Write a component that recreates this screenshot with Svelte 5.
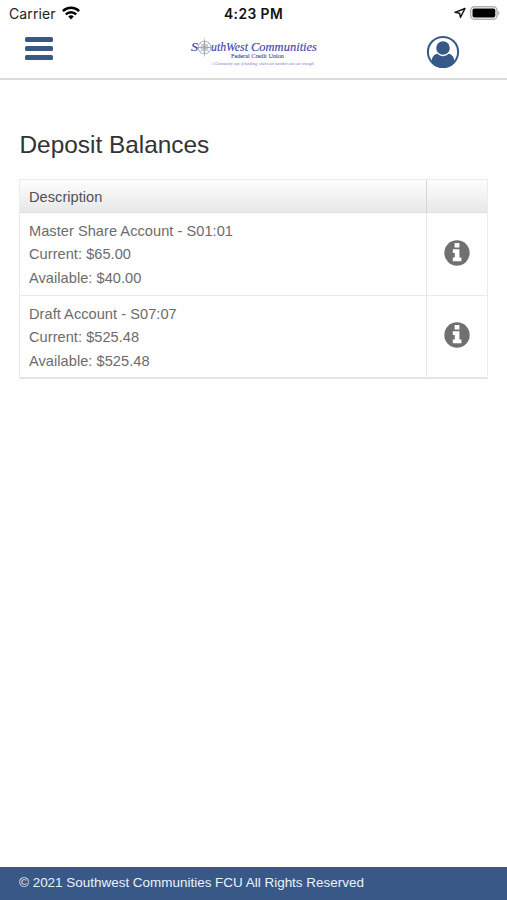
<script lang="ts">
  type Account = { name: string; current: string; available: string };

  const accounts: Account[] = [
    { name: 'Master Share Account - S01:01', current: '$65.00', available: '$40.00' },
    { name: 'Draft Account - S07:07', current: '$525.48', available: '$525.48' },
  ];
</script>

<div class="screen">
  <div class="status">
    <div class="carrier">
      <span>Carrier</span>
      <svg width="18" height="14" viewBox="0 0 18 14" fill="none" stroke="#000" stroke-width="2.5">
        <path d="M0.9 5.2C5.3 0.7 12.7 0.7 17.1 5.2" />
        <path d="M3.8 8.3C6.8 5.4 11.2 5.4 14.2 8.3" />
        <path d="M6.2 10.4C7.8 8.8 10.2 8.8 11.8 10.4L9 13.4Z" fill="#000" stroke="none" />
      </svg>
    </div>
    <span class="time">4:23 PM</span>
    <div class="power">
      <svg width="12" height="12" viewBox="0 0 12 12" fill="none" stroke="#111" stroke-width="1.4" stroke-linejoin="round">
        <path d="M1 5.3L11 1.5L6.4 10.4L5.6 6.2Z" />
      </svg>
      <svg width="30" height="14" viewBox="0 0 30 14">
        <rect x="0.7" y="0.7" width="26.3" height="12.6" rx="3.8" fill="#fff" stroke="#b0b0b0" stroke-width="1.4" />
        <rect x="2.5" y="2.4" width="22.8" height="9.2" rx="1.8" />
        <path d="M28.2 4.7C29.8 5.6 29.8 8.4 28.2 9.3Z" fill="#aaa" />
      </svg>
    </div>
  </div>

  <header>
    <button class="menu" aria-label="Menu">
      <span></span>
      <span></span>
      <span></span>
    </button>

    <svg class="logo" width="130" height="32" viewBox="0 0 130 32">
      <g fill="none" stroke="#a5a9b2" stroke-width="0.9">
        <circle cx="14.5" cy="11.5" r="6.4" />
        <circle cx="14.5" cy="11.5" r="3.4" stroke-width="0.6" />
        <path d="M10 7L19 16M19 7L10 16" stroke-width="0.6" />
      </g>
      <path
        d="M14.5 1L15.6 10.4L24.5 11.5L15.6 12.6L14.5 22L13.4 12.6L4.5 11.5L13.4 10.4Z"
        fill="#a5a9b0"
      />
      <g class="brand">
        <text x="1" y="15" textLength="7" lengthAdjust="spacingAndGlyphs">S</text>
        <text x="21" y="15" textLength="37" lengthAdjust="spacingAndGlyphs">uthWest</text>
        <text x="61" y="15" textLength="66" lengthAdjust="spacingAndGlyphs">Communities</text>
      </g>
      <text class="sub" x="41" y="21.5" textLength="53" lengthAdjust="spacingAndGlyphs">Federal Credit Union</text>
      <text class="tagline" x="22" y="29" textLength="102" lengthAdjust="spacingAndGlyphs">
        A Community way of banking, where our members are our strength
      </text>
    </svg>

    <button class="profile" aria-label="Profile">
      <svg width="34" height="34" viewBox="0 0 34 34">
        <circle cx="17" cy="17" r="15.1" fill="#fff" stroke="#385988" stroke-width="2" />
        <circle cx="17" cy="13" r="6.8" fill="#385988" />
        <path
          d="M5.5 26.5C6 21.8 8.2 19.4 11.3 18.8C14.7 21.9 19.3 21.9 22.7 18.8C25.8 19.4 28 21.8 28.5 26.5C25.8 30 22 32 17 32S8.2 30 5.5 26.5Z"
          fill="#385988"
        />
      </svg>
    </button>
  </header>

  <main>
    <h1>Deposit Balances</h1>

    <div class="table">
      <div class="row head">
        <div class="desc">Description</div>
        <div class="action"></div>
      </div>
      {#each accounts as account (account.name)}
        <div class="row">
          <div class="desc">
            <div>{account.name}</div>
            <div>Current: {account.current}</div>
            <div>Available: {account.available}</div>
          </div>
          <div class="action">
            <svg width="26" height="26" viewBox="0 0 26 26">
              <circle cx="13" cy="13" r="12.7" fill="#707070" />
              <path d="M10.6 3H15.4V7.4H10.6ZM8.8 9.2H15.4V17.6H17.4V21.3H8.8V17.6H10.8V12.9H8.8Z" fill="#fff" />
            </svg>
          </div>
        </div>
      {/each}
    </div>
  </main>

  <footer>© 2021 Southwest Communities FCU All Rights Reserved</footer>
</div>

<style>
  :global(body) {
    margin: 0;
    background: #fefefe;
  }

  .screen {
    display: flex;
    flex-direction: column;
    height: 900px;
    font-family: 'Liberation Sans', Arial, sans-serif;
  }

  .status {
    display: grid;
    grid-template-columns: 1fr auto 1fr;
    align-items: center;
    height: 27px;
    padding: 0 7px 0 9px;
    font-family: Inter, sans-serif;
    font-size: 14px;
    color: #222;
  }

  .carrier,
  .power {
    display: flex;
    align-items: center;
  }

  .carrier {
    gap: 6px;
    letter-spacing: 0.1px;
  }

  .carrier svg {
    margin-top: -2px;
  }

  .time {
    margin-right: 2px;
    font-size: 13.8px;
    font-weight: 600;
    letter-spacing: 0.45px;
    color: #111;
  }

  .power {
    justify-content: flex-end;
    gap: 4px;
    margin-top: -1px;
  }

  header {
    display: grid;
    grid-template-columns: 165px 1fr auto;
    align-items: start;
    box-sizing: border-box;
    height: 53px;
    padding: 8px 47px 0 25px;
    border-bottom: 2px solid #dadada;
  }

  button {
    padding: 0;
    border: 0;
    background: none;
  }

  .menu {
    display: flex;
    flex-direction: column;
    gap: 4px;
    width: 28px;
    padding-top: 2px;
  }

  .menu span {
    height: 5px;
    border-radius: 1.5px;
    background: #385988;
  }

  .logo {
    margin-top: 1px;
  }

  .brand {
    font: italic 12.5px 'Liberation Serif', serif;
    fill: #4444ad;
    stroke: #4444ad;
    stroke-width: 0.15;
  }

  .sub {
    font: 6px 'Liberation Serif', serif;
    fill: #4e4e9e;
    stroke: #4e4e9e;
    stroke-width: 0.1;
  }

  .tagline {
    font: italic 4px 'Liberation Serif', serif;
    fill: #7777bd;
  }

  .profile svg {
    display: block;
  }

  main {
    flex: 1;
    padding: 50px 19px 0;
  }

  h1 {
    margin: 0 0 19px 0.5px;
    font-size: 24.4px;
    font-weight: 400;
    line-height: 30px;
    color: #333;
  }

  .table {
    border: 1px solid #ebebeb;
    border-bottom: 2px solid #e5e5e5;
  }

  .row {
    display: grid;
    grid-template-columns: 1fr 61px;
    box-sizing: border-box;
    height: 82px;
    font-size: 14.6px;
    line-height: 23.3px;
    letter-spacing: 0.04px;
    color: #6c6c6c;
  }

  .row + .row + .row {
    border-top: 1px solid #e9e9e9;
  }

  .desc {
    padding: 7px 9px 0;
  }

  .action {
    display: flex;
    align-items: center;
    justify-content: center;
    box-sizing: border-box;
    padding-bottom: 3px;
    border-left: 1px solid #e6e6e6;
  }

  .head {
    height: 33px;
    background: linear-gradient(#fdfdfd, #e8e8e8);
    border-bottom: 1px solid #dedede;
    color: #505050;
  }

  .head .desc {
    padding-top: 6px;
  }

  .head .action {
    border-color: #d5d5d5;
  }

  footer {
    box-sizing: border-box;
    height: 33px;
    padding-left: 19px;
    background: #385988;
    color: #edf2f8;
    font-size: 13.46px;
    line-height: 31px;
  }
</style>
